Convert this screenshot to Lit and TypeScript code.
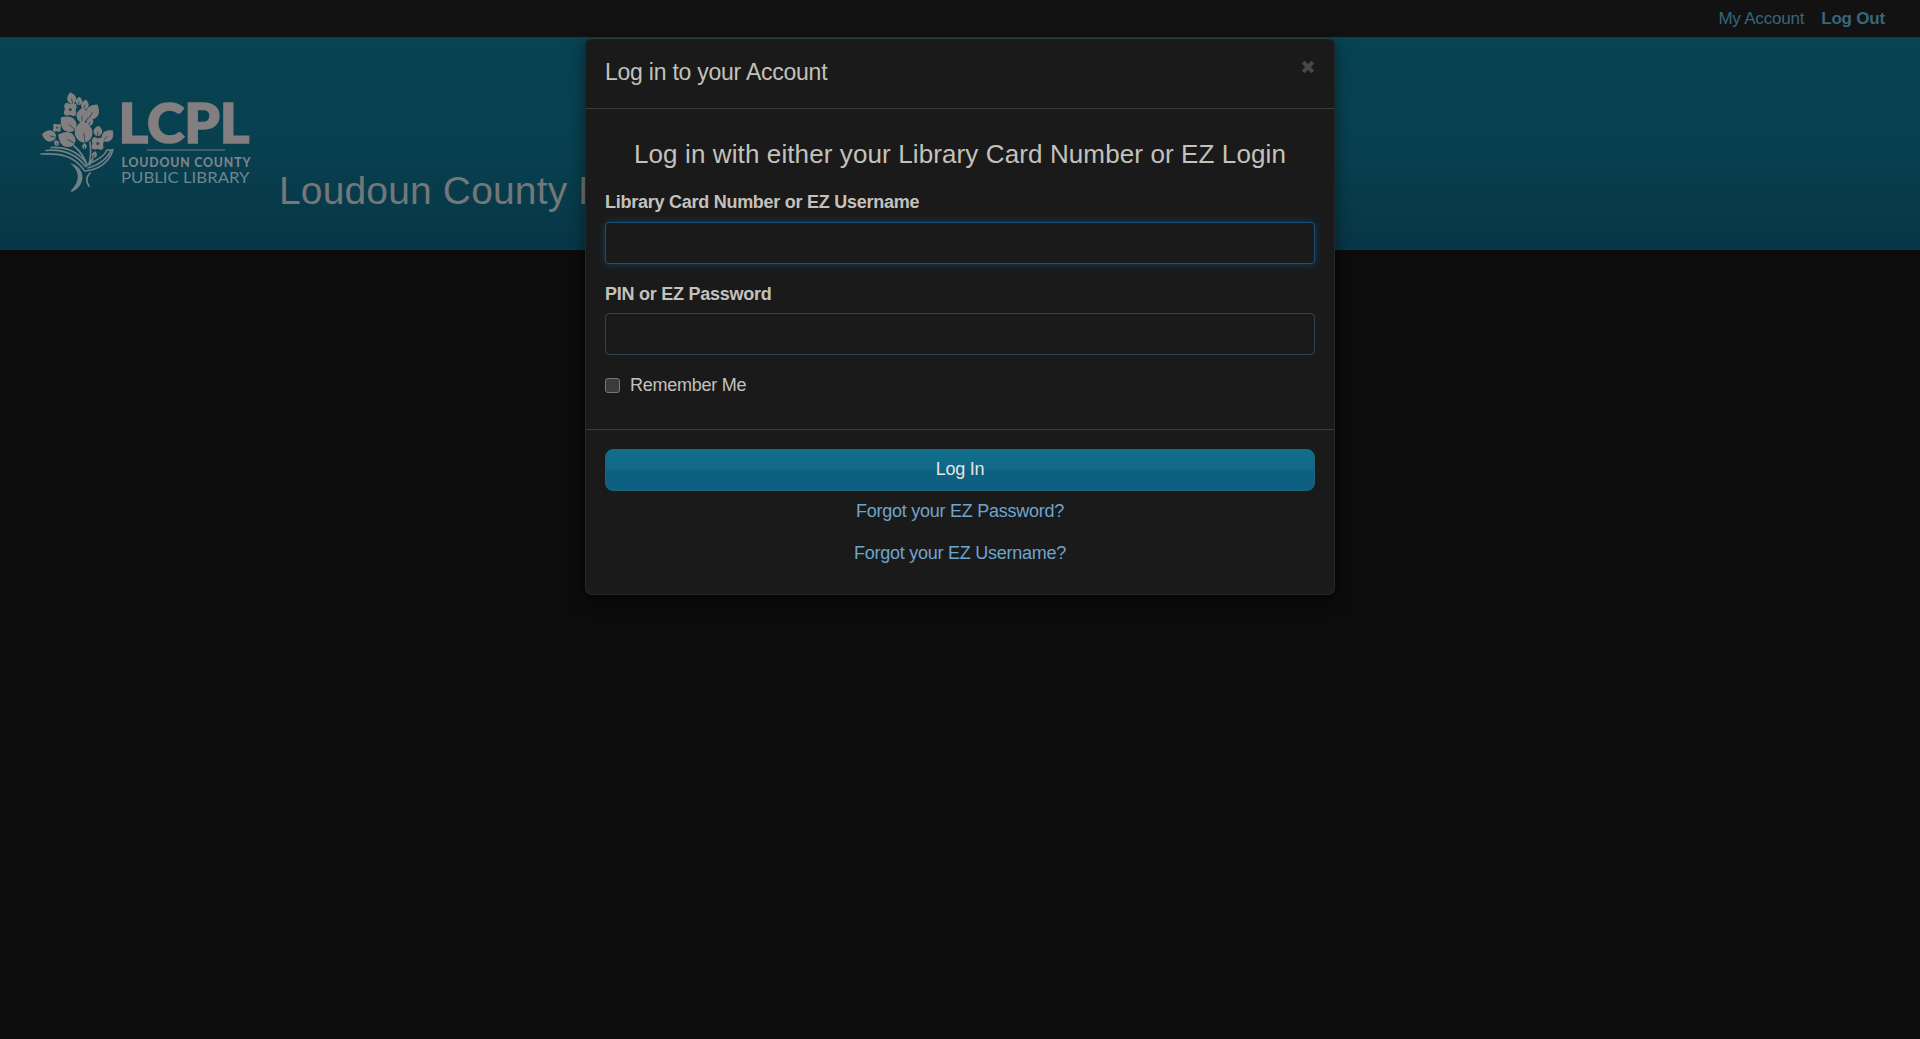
import { LitElement, html, css, svg } from "lit";
import { customElement } from "lit/decorators.js";

// Leaves of the bouquet: centre x, centre y, half length, half width, rotation in degrees
const LEAVES: number[][] = [
  [71.5, 98, 6, 4.1, -12],
  [79, 101, 4.2, 3, 8],
  [85, 104.5, 4.9, 3.5, 14],
  [93, 111.5, 8.2, 5.9, 32],
  [82.3, 115, 7.4, 5.3, 4],
  [90, 121.5, 4.6, 3.2, 20],
  [68, 123.5, 9.4, 6.9, -48],
  [83.5, 131.5, 11, 8.2, -8],
  [66.5, 139, 9.4, 6.9, -62],
  [49, 135.8, 7.2, 5.2, -78],
  [98, 131, 5.2, 4, 8],
  [108, 135.5, 7, 5, 44],
  [56.5, 143, 3.2, 2.3, -30],
  [84.5, 146, 3, 2.2, 0],
  [94.5, 154.5, 3.4, 2.4, 18],
];

// Four-petal flowers: centre x, centre y, scale
const FLOWERS: number[][] = [
  [70.3, 109.5, 1.24],
  [57, 127.8, 0.78],
  [97.8, 143.5, 1.2],
];

@customElement("library-logo")
export class LibraryLogo extends LitElement {
  static styles = css`
    :host { display: block; flex: none; width: 220px; height: 125px; }
    .art { display: block; width: 100%; height: 100%; }
    .ink { fill: #827f80; }
    .core { fill: #2d4a53; }
    .vein { fill: none; stroke: #16424e; stroke-width: 0.7; stroke-linecap: round; }
    .line { fill: none; stroke: #718086; stroke-width: 1.7; stroke-linecap: round; }
    .trunk { fill: #718086; }
    .rule { fill: #4c666f; }
    .big { font: 900 56px Lato, sans-serif; fill: #837f80; stroke: #837f80; stroke-width: 1.7; }
    .mid { font: 900 12.3px Lato, sans-serif; fill: #7b8387; }
    .low { font: 400 15px Lato, sans-serif; fill: #71858c; }
  `;

  render() {
    return html`<svg class="art" viewBox="35 75 220 125" role="img" aria-label="LCPL">
      <path class="line" d="M74 146 C80 151 85 158 87 166 M90 142 C91 150 91 157 89 165 M94 156 L90 164" />
      ${LEAVES.map(
        ([x, y, l, w, r]) => svg`<g transform="translate(${x} ${y}) rotate(${r})">
          <path class="ink" d="M0 ${-l} C${w * 0.8} ${-l * 0.6} ${w * 1.3} ${-l * 0.1} ${w} ${l * 0.4} C${w * 0.8} ${l * 0.85} ${w * 0.3} ${l} 0 ${l} C${-w * 0.3} ${l} ${-w * 0.8} ${l * 0.85} ${-w} ${l * 0.4} C${-w * 1.3} ${-l * 0.1} ${-w * 0.8} ${-l * 0.6} 0 ${-l}Z" />
          <path class="vein" d="M0 ${l} L0 ${l * 0.15}" />
        </g>`
      )}
      ${FLOWERS.map(
        ([x, y, s]) => svg`<g transform="translate(${x} ${y}) scale(${s}) rotate(4)">
          <path class="ink" d="M0 -4.2 C2 -6 5.2 -5.2 5 -2.7 C4.7 -1 4.4 0 4.5 1 C5.6 3.6 4.4 5.3 2.5 5 C1 4.5 0 4.3 -1 4.8 C-3.4 5.8 -5.4 4.4 -5 2.4 C-4.4 1 -4.3 0 -4.8 -1.2 C-5.8 -3.6 -4 -5.4 -2.4 -5Z" />
          <circle class="core" cx="0" cy="0" r="1.3" />
        </g>`
      )}
      <path class="line" d="M41 154 C59 153 73 155 84 170 M46 150.5 C62 149 76 154 85.5 166.5 M51 147.5 C66 147 77 151 86.5 163" />
      <path class="line" d="M88 164 C96 161 104 157 107 150 L111 150 C107 160 98 165 88 168 M113 149.5 C109 163 98 170 85 171" />
      <path class="trunk" d="M70 163 C85 167 87 184 73 191.5 L70 191.5 C80 182 81 172 70 163Z" />
      <path class="line" d="M90 173 C86 177 86 182 89 186" />
      <text class="big" x="118.5" y="143" textLength="131" lengthAdjust="spacingAndGlyphs">LCPL</text>
      <rect class="rule" x="147" y="149.3" width="78" height="1.6" />
      <text class="mid" x="121.5" y="166.5" textLength="129" lengthAdjust="spacing">LOUDOUN COUNTY</text>
      <text class="low" x="121" y="183" textLength="128.5" lengthAdjust="spacingAndGlyphs">PUBLIC LIBRARY</text>
    </svg>`;
  }
}

@customElement("login-dialog")
export class LoginDialog extends LitElement {
  static styles = css`
    :host { display: block; box-sizing: border-box; width: 750px; color: #c4c1bc;
      font: 18px/26px "Liberation Sans", Arial, sans-serif; letter-spacing: -0.26px;
      background: #1a1a1a; border: 1px solid #252829; border-top-color: #214039; border-radius: 7px;
      box-shadow: 0 5px 15px rgba(0, 0, 0, 0.5); }
    .head { display: flex; justify-content: space-between; box-sizing: border-box; height: 70px;
      padding: 17px 19px 0; border-bottom: 1px solid #333c40; }
    .title { margin: 0; font-size: 23px; line-height: 32px; font-weight: 400; letter-spacing: -0.24px; }
    .close { width: 14px; height: 14px; margin-top: 4px; }
    .body { box-sizing: border-box; height: 321px; padding: 29px 19px 0; border-bottom: 1px solid #333c40; }
    .lead { margin: 0 0 19px; text-align: center; font-size: 26px; line-height: 32px; font-weight: 400;
      letter-spacing: 0.11px; white-space: nowrap; }
    .label { display: block; font-weight: 700; line-height: 26px; margin-bottom: 7px; }
    .second { margin: 17px 0 6px; }
    .field { display: block; box-sizing: border-box; width: 100%; height: 42px; margin: 0;
      background: #1a1a1a; border: 1px solid #33444c; border-radius: 4px; outline: none; }
    .active { border-color: #1d5078; box-shadow: 0 0 8px rgba(20, 78, 119, 0.7); }
    .remember { display: flex; align-items: center; gap: 10px; line-height: 26px; margin-top: 17px; }
    .box { box-sizing: border-box; width: 15px; height: 15px; margin-top: 1px; background: #3b3b3b;
      border: 1px solid #777; border-radius: 3px; }
    .foot { box-sizing: border-box; height: 164px; padding: 19px 19px 0; display: flex; flex-direction: column; }
    .submit { height: 42px; box-sizing: border-box; border: 1px solid #206579; border-radius: 8px; color: #e8e6e3;
      font: inherit; letter-spacing: -0.22px; padding: 0 0 2px; margin-bottom: -1px; text-align: center;
      background: linear-gradient(#11708c, #116888 45%, #0c6080 55%, #0f6083); }
    .link { align-self: center; line-height: 42px; color: #6ea5ce; text-decoration: none; }
  `;

  render() {
    return html`
      <div class="head">
        <h4 class="title">Log in to your Account</h4>
        <svg class="close" viewBox="0 0 14 14"><path d="M2.2 2.2 L11.8 11.8 M11.8 2.2 L2.2 11.8" stroke="#494949" stroke-width="3.9" /></svg>
      </div>
      <div class="body">
        <h3 class="lead">Log in with either your Library Card Number or EZ Login</h3>
        <label class="label">Library Card Number or EZ Username</label>
        <input class="field active" type="text" />
        <label class="label second">PIN or EZ Password</label>
        <input class="field" type="password" />
        <div class="remember"><span class="box"></span><span>Remember Me</span></div>
      </div>
      <div class="foot">
        <button class="submit">Log In</button>
        <a class="link">Forgot your EZ Password?</a>
        <a class="link">Forgot your EZ Username?</a>
      </div>`;
  }
}

@customElement("app-root")
export class AppRoot extends LitElement {
  static styles = css`
    :host { display: block; position: relative; height: 1039px; overflow: hidden; background: #0c0c0c;
      font-family: "Liberation Sans", Arial, sans-serif; }
    .bar { display: flex; justify-content: flex-end; gap: 17px; box-sizing: border-box; height: 37px;
      padding: 0 35px 0 0; background: #121212; color: #38667b; font-size: 17px; line-height: 37px; letter-spacing: -0.2px; }
    .strong { font-weight: 700; }
    .banner { display: flex; box-sizing: border-box; height: 213px; padding: 38px 0 0 35px; gap: 24px;
      background: linear-gradient(#074353, #08404f 50%, #073646); overflow: hidden; }
    .name { margin: 0; padding-top: 93px; font-size: 39px; line-height: 46px;
      font-weight: 400; color: #747778; letter-spacing: 0.15px; white-space: nowrap; }
    .dialog { position: absolute; top: 38px; left: 585px; }
  `;

  render() {
    return html`
      <nav class="bar"><a>My Account</a><a class="strong">Log Out</a></nav>
      <header class="banner">
        <library-logo></library-logo>
        <h1 class="name">Loudoun County P</h1>
      </header>
      <login-dialog class="dialog"></login-dialog>`;
  }
}
